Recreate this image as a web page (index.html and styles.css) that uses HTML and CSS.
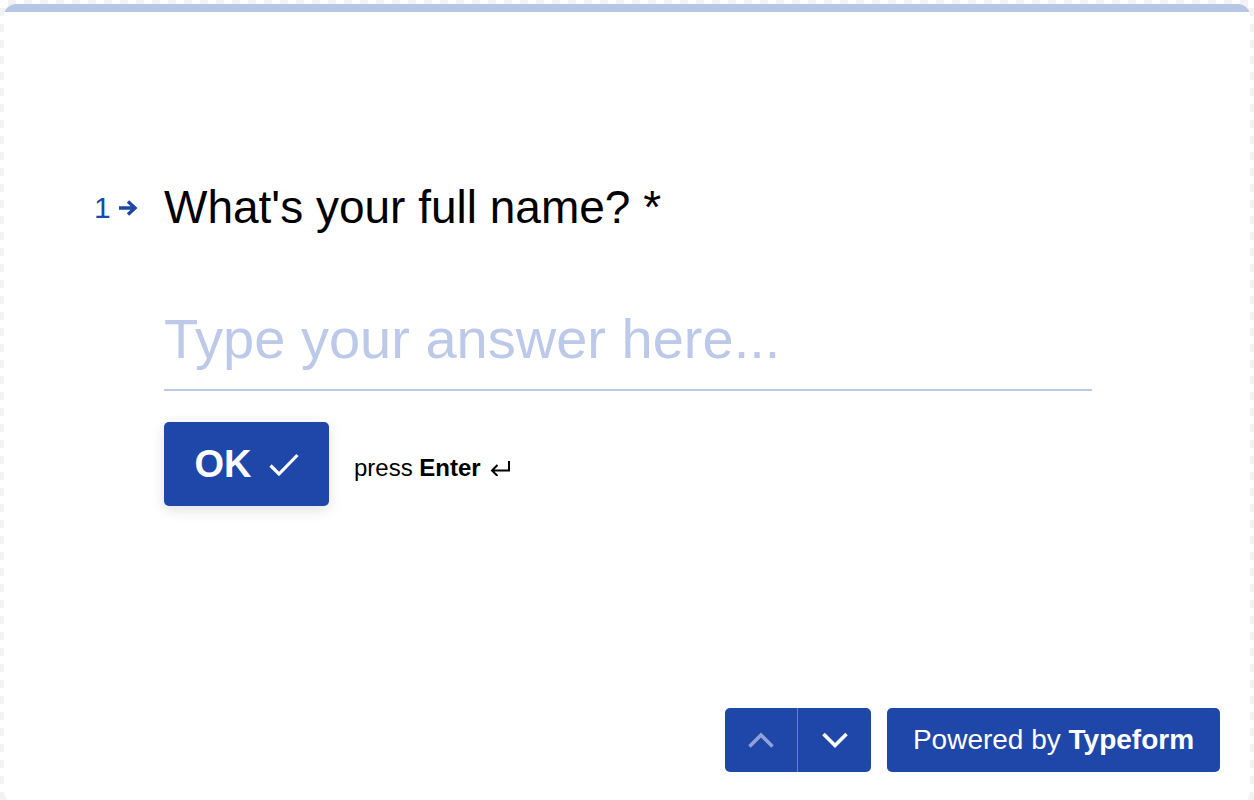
FILE: index.html
```html
<!DOCTYPE html>
<html lang="en">
<head>
<meta charset="utf-8">
<title>Typeform</title>
<link rel="stylesheet" href="styles.css">
</head>
<body>
<div class="card">
  <div class="progress"></div>
  <main class="content">
    <div class="question">
      <span class="qnum"><span class="qdigit">1</span><svg class="qarrow" width="21" height="20" viewBox="0 0 21 20"><path d="M1 10h15.5M10 3.5l7 6.5-7 6.5" fill="none" stroke="#1f46a9" stroke-width="3.4"/></svg></span>
      <h1 class="qtext">What's your full name? *</h1>
    </div>
    <div class="answer">Type your answer here...</div>
    <div class="actions">
      <button class="ok"><span>OK</span><svg width="30" height="24" viewBox="0 0 30 24"><path d="M1.5 12.5l8.5 8.5L28.5 2" fill="none" stroke="#fff" stroke-width="3.2"/></svg></button>
      <span class="hint">press <b>Enter</b><svg class="enter" width="21" height="16" viewBox="0 0 21 16"><path d="M19 1v9.5H2.5M7.5 5l-5.5 5.5 5.5 5.5" fill="none" stroke="#000" stroke-width="2"/></svg></span>
    </div>
  </main>
  <footer class="footer">
    <div class="nav">
      <button class="navbtn up"><svg width="28" height="18" viewBox="0 0 28 18"><path d="M2.5 15.5L14 4l11.5 11.5" fill="none" stroke="#fff" stroke-width="3.6"/></svg></button>
      <button class="navbtn"><svg width="28" height="18" viewBox="0 0 28 18"><path d="M2.5 3L14 14.5 25.5 3" fill="none" stroke="#fff" stroke-width="3.6"/></svg></button>
    </div>
    <a class="powered"><span>Powered by <b>Typeform</b></span></a>
  </footer>
</div>
</body>
</html>
```
FILE: styles.css
```css
html, body {
  margin: 0;
  padding: 0;
  height: 100%;
}
body {
  width: 1254px;
  height: 800px;
  overflow: hidden;
  box-sizing: border-box;
  padding: 4px 4px 0 4px;
  background-color: #ffffff;
  background-image:
    linear-gradient(45deg, #f2f2f2 25%, transparent 25%, transparent 75%, #f2f2f2 75%),
    linear-gradient(45deg, #f2f2f2 25%, transparent 25%, transparent 75%, #f2f2f2 75%);
  background-size: 16px 16px;
  background-position: 0 0, 8px 8px;
  font-family: "Liberation Sans", Arial, sans-serif;
}
.card {
  position: relative;
  height: 800px;
  background: #ffffff;
  border-radius: 12px;
  overflow: hidden;
  display: flex;
  flex-direction: column;
}
.progress {
  height: 8px;
  background: #b7c5e6;
  flex: none;
}
.content {
  flex: 1;
  padding: 167px 0 0 160px;
}
.question {
  display: flex;
  align-items: flex-start;
}
.qnum {
  margin-left: -70px;
  margin-top: 11px;
  width: 70px;
  height: 36px;
  font-size: 30px;
  line-height: 36px;
  color: #1f46a9;
  display: flex;
  align-items: center;
  gap: 7px;
}
.qarrow {
  display: block;
  margin-top: -1px;
}
.qtext {
  margin: 0;
  font-weight: 400;
  font-size: 46px;
  line-height: 56px;
  color: #000;
}
.answer {
  margin-top: 70px;
  width: 928px;
  font-size: 56px;
  line-height: 68px;
  color: #bcc9e8;
  border-bottom: 2px solid #bcc9e8;
  padding-bottom: 16px;
}
.actions {
  margin-top: 31px;
  display: flex;
  align-items: center;
  gap: 25px;
}
.ok {
  width: 165px;
  height: 84px;
  border: none;
  border-radius: 5px;
  background: #1f46a9;
  color: #fff;
  font-family: inherit;
  font-weight: 700;
  font-size: 38px;
  display: flex;
  align-items: center;
  justify-content: center;
  gap: 17px;
  box-shadow: 0 4px 14px rgba(0, 0, 0, 0.12);
  padding: 0;
}
.ok svg {
  margin-top: 1px;
}
.hint {
  font-size: 24px;
  color: #000;
  margin-top: 8px;
  white-space: nowrap;
}
.hint b {
  font-weight: 700;
}
.enter {
  margin-left: 9px;
  vertical-align: 0px;
}
.footer {
  position: absolute;
  right: 30px;
  bottom: 32px;
  display: flex;
  gap: 16px;
}
.nav {
  display: flex;
  border-radius: 5px;
  overflow: hidden;
}
.navbtn {
  width: 73px;
  height: 64px;
  border: none;
  background: #1f46a9;
  padding: 0;
  display: flex;
  align-items: center;
  justify-content: center;
}
.navbtn.up {
  border-right: 1px solid #6581c8;
}
.navbtn.up svg {
  opacity: 0.5;
}
.powered {
  width: 333px;
  height: 64px;
  border-radius: 5px;
  background: #1f46a9;
  color: #fff;
  font-size: 28px;
  display: flex;
  align-items: center;
  justify-content: center;
}
```
